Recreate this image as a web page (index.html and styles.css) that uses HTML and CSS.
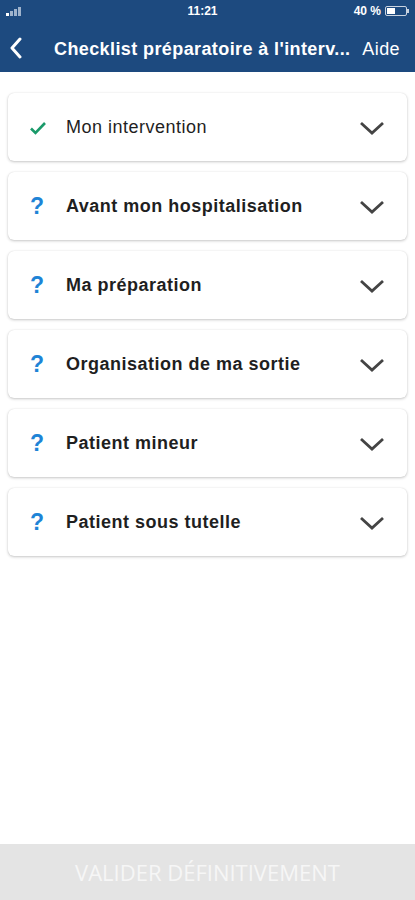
FILE: index.html
```html
<!DOCTYPE html>
<html lang="fr">

<head>
    <meta charset="UTF-8">
    <meta name="viewport" content="width=device-width, initial-scale=1.0">
    <title>Checklist préparatoire</title>
    <link rel="stylesheet" href="styles.css">
</head>

<body>
    <div class="app">
        <header class="topbar">
            <div class="statusbar">
                <span class="signal">
                    <i class="b1"></i><i class="b2"></i><i class="b3"></i><i class="b4"></i>
                </span>
                <span class="time">11:21</span>
                <span class="battery">40 %
                    <span class="batt-body"><span class="batt-level"></span></span><span class="batt-tip"></span>
                </span>
            </div>
            <nav class="navbar">
                <svg class="back" width="14" height="22" viewBox="0 0 14 22">
                    <path d="M11 2 L3 11 L11 20" fill="none" stroke="#fff" stroke-width="3" stroke-linecap="round" stroke-linejoin="round" />
                </svg>
                <span class="nav-title">Checklist préparatoire à l'interv...</span>
                <span class="nav-help">Aide</span>
            </nav>
        </header>

        <main class="list">
            <div class="card">
                <span class="status done">
                    <svg width="18" height="14" viewBox="0 0 18 14">
                        <path d="M2 7.5 L6.5 12 L16 2" fill="none" stroke="#1a9a6a" stroke-width="2.6" />
                    </svg>
                </span>
                <span class="label light">Mon intervention</span>
                <svg class="chevron" width="26" height="16" viewBox="0 0 26 16">
                    <path d="M2 3 L13 13 L24 3" fill="none" stroke="#444" stroke-width="2.8" />
                </svg>
            </div>
            <div class="card">
                <span class="status todo">?</span>
                <span class="label">Avant mon hospitalisation</span>
                <svg class="chevron" width="26" height="16" viewBox="0 0 26 16">
                    <path d="M2 3 L13 13 L24 3" fill="none" stroke="#444" stroke-width="2.8" />
                </svg>
            </div>
            <div class="card">
                <span class="status todo">?</span>
                <span class="label">Ma préparation</span>
                <svg class="chevron" width="26" height="16" viewBox="0 0 26 16">
                    <path d="M2 3 L13 13 L24 3" fill="none" stroke="#444" stroke-width="2.8" />
                </svg>
            </div>
            <div class="card">
                <span class="status todo">?</span>
                <span class="label">Organisation de ma sortie</span>
                <svg class="chevron" width="26" height="16" viewBox="0 0 26 16">
                    <path d="M2 3 L13 13 L24 3" fill="none" stroke="#444" stroke-width="2.8" />
                </svg>
            </div>
            <div class="card">
                <span class="status todo">?</span>
                <span class="label">Patient mineur</span>
                <svg class="chevron" width="26" height="16" viewBox="0 0 26 16">
                    <path d="M2 3 L13 13 L24 3" fill="none" stroke="#444" stroke-width="2.8" />
                </svg>
            </div>
            <div class="card">
                <span class="status todo">?</span>
                <span class="label">Patient sous tutelle</span>
                <svg class="chevron" width="26" height="16" viewBox="0 0 26 16">
                    <path d="M2 3 L13 13 L24 3" fill="none" stroke="#444" stroke-width="2.8" />
                </svg>
            </div>
        </main>

        <footer class="validate">VALIDER DÉFINITIVEMENT</footer>
    </div>
</body>

</html>
```

FILE: styles.css
```css
* {
    box-sizing: border-box;
}

body {
    margin: 0;
    font-family: 'Liberation Sans', Arial, sans-serif;
    background-color: #ffffff;
}

.app {
    display: flex;
    flex-direction: column;
    height: 900px;
}

.topbar {
    background-color: #1d4a7f;
    color: #ffffff;
}

.statusbar {
    height: 22px;
    display: flex;
    align-items: center;
    justify-content: space-between;
    padding: 0 6px 0 6px;
    font-size: 12px;
    font-weight: bold;
}

.signal {
    display: flex;
    align-items: flex-end;
    gap: 1px;
    height: 10px;
    width: 60px;
}

.signal i {
    display: block;
    width: 3px;
    background-color: #9fb3cc;
}

.signal .b1 {
    height: 3px;
    background-color: #ffffff;
}

.signal .b2 {
    height: 5px;
}

.signal .b3 {
    height: 7px;
}

.signal .b4 {
    height: 9px;
}

.time {
    margin-left: 12px;
}

.battery {
    display: flex;
    align-items: center;
    width: 82px;
    justify-content: flex-end;
}

.batt-body {
    display: inline-block;
    width: 22px;
    height: 10px;
    border: 1px solid #c9d3e0;
    border-radius: 2px;
    margin-left: 4px;
    padding: 1px;
}

.batt-level {
    display: block;
    width: 8px;
    height: 100%;
    background-color: #ffffff;
}

.batt-tip {
    display: inline-block;
    width: 2px;
    height: 4px;
    background-color: #c9d3e0;
}

.navbar {
    height: 50px;
    display: flex;
    align-items: center;
    padding: 4px 15px 0 9px;
}

.back {
    flex: none;
    margin-bottom: 2px;
}

.nav-title {
    flex: 1;
    font-size: 18px;
    font-weight: bold;
    letter-spacing: 0.4px;
    margin-left: 31px;
    white-space: nowrap;
}

.nav-help {
    font-size: 18px;
    letter-spacing: 0.4px;
}

.list {
    flex: 1;
    padding: 21px 8px 0 8px;
    display: flex;
    flex-direction: column;
    gap: 11px;
}

.card {
    height: 68px;
    display: flex;
    align-items: center;
    padding: 1px 22px 0 20px;
    background-color: #ffffff;
    border-radius: 6px;
    box-shadow: 0 1px 3px rgba(0, 0, 0, 0.22), 0 0 1px rgba(0, 0, 0, 0.12);
}

.status {
    width: 38px;
    flex: none;
}

.status.todo {
    color: #1e84d6;
    font-size: 23px;
    font-weight: bold;
    padding-left: 2px;
}

.status.done svg {
    display: block;
    margin-left: 1px;
}

.label {
    flex: 1;
    font-size: 18px;
    font-weight: bold;
    letter-spacing: 0.5px;
    color: #1f1f1f;
}

.label.light {
    font-weight: normal;
}

.chevron {
    flex: none;
}

.validate {
    height: 56px;
    background-color: #e4e4e4;
    color: #f6f6f6;
    display: flex;
    align-items: center;
    justify-content: center;
    font-family: 'Open Sans', sans-serif;
    font-size: 22px;
}
```
